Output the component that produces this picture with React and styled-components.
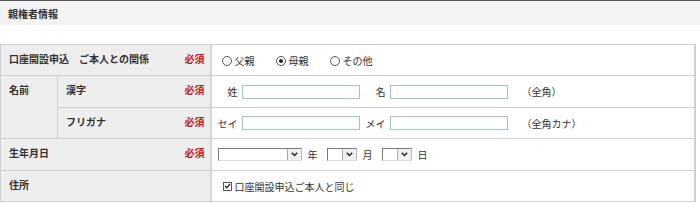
import React from 'react';
import styled, { createGlobalStyle } from 'styled-components';

const GlobalStyle = createGlobalStyle`
  body {
    margin: 0;
    background: #fff;
    font-family: "Noto Sans CJK JP", "Noto Sans", sans-serif;
    font-size: 10px;
    color: #333;
  }
`;

const Page = styled.div`
  width: 700px;
  height: 204px;
  overflow: hidden;
`;

const Heading = styled.h3`
  margin: 0;
  height: 24px;
  padding-left: 8px;
  display: flex;
  align-items: center;
  background: #f3f3f3;
  border-top: 1px solid #555;
  font-size: 10px;
  font-weight: bold;
  color: #333;
`;

const Table = styled.table`
  margin-top: 19px;
  width: 696px;
  border-collapse: collapse;
  table-layout: fixed;
  border: 1px solid #cfcfcf;
  border-right-width: 2px;

  td {
    border: 1px solid #cfcfcf;
  }
`;

const LabelCell = styled.td`
  background: #eeeeee;
  font-weight: bold;
  vertical-align: top;
  padding: 6px 5px 0 8px;
  height: ${({ $h }) => $h || 31}px;
  box-sizing: border-box;
  ${({ $divider }) => $divider && 'border-right: 2px solid #d6d6d6 !important;'}
`;

const LabelInner = styled.div`
  display: flex;
  justify-content: space-between;
`;

const Required = styled.span`
  color: #c8161d;
  font-weight: bold;
`;

const ValueCell = styled.td`
  padding: 0 6px;
  vertical-align: middle;
  white-space: nowrap;
`;

const Row = styled.div`
  display: flex;
  align-items: center;
  padding-top: ${({ $top }) => $top || 0}px;
`;

const RadioLabel = styled.label`
  display: inline-flex;
  align-items: center;
  margin-right: 21px;
  margin-left: ${({ $first }) => ($first ? 4 : 0)}px;
`;

const Radio = styled.span`
  width: 10px;
  height: 10px;
  border: 1px solid #555;
  border-radius: 50%;
  margin-right: 3px;
  box-sizing: border-box;
  display: inline-flex;
  align-items: center;
  justify-content: center;
  &::after {
    content: '';
    width: 4px;
    height: 4px;
    border-radius: 50%;
    background: ${({ $on }) => ($on ? '#222' : 'transparent')};
  }
`;

const FieldLabel = styled.span`
  width: ${({ $w }) => $w}px;
  text-align: right;
  padding-right: 4px;
  box-sizing: border-box;
  white-space: nowrap;
`;

const TextInput = styled.span`
  display: inline-block;
  width: 118px;
  height: 14px;
  border: 1px solid #a7bdd0;
  box-sizing: border-box;
  background: #fff;
`;

const Note = styled.span`
  margin-left: 14px;
`;

const Select = styled.span`
  display: inline-flex;
  justify-content: flex-end;
  width: ${({ $w }) => $w}px;
  height: 13px;
  border: 1px solid #7a7a7a;
  border-right-color: #bbb;
  border-bottom-color: #ddd;
  box-sizing: border-box;
  background: #fff;
`;

const Arrow = styled.span`
  width: 13px;
  height: 11px;
  border-left: 1px solid #aaa;
  background: #f0f0f0;
  display: flex;
  align-items: center;
  justify-content: center;
`;

const DateUnit = styled.span`
  margin: 0 ${({ $r }) => $r}px 0 6px;
`;

const Check = styled.span`
  width: 9px;
  height: 9px;
  border: 1px solid #555;
  box-sizing: border-box;
  display: inline-flex;
  align-items: center;
  justify-content: center;
  margin: 0 3px 0 5px;
`;

const ArrowIcon = () => (
  <svg width="7" height="5" viewBox="0 0 7 5">
    <path d="M0.8 0.8 L3.5 3.6 L6.2 0.8" fill="none" stroke="#222" strokeWidth="1.4" />
  </svg>
);

const DateSelect = ({ w }) => (
  <Select $w={w}>
    <Arrow>
      <ArrowIcon />
    </Arrow>
  </Select>
);

const App = () => (
  <Page>
    <GlobalStyle />
    <Heading>親権者情報</Heading>
    <Table>
      <colgroup>
        <col style={{ width: 57 }} />
        <col style={{ width: 153 }} />
        <col />
      </colgroup>
      <tbody>
        <tr>
          <LabelCell colSpan={2} $divider>
            <LabelInner>
              <span>口座開設申込　ご本人との関係</span>
              <Required>必須</Required>
            </LabelInner>
          </LabelCell>
          <ValueCell>
            <Row $top={1}>
              <RadioLabel $first>
                <Radio />父親
              </RadioLabel>
              <RadioLabel>
                <Radio $on />母親
              </RadioLabel>
              <RadioLabel>
                <Radio />その他
              </RadioLabel>
            </Row>
          </ValueCell>
        </tr>
        <tr>
          <LabelCell rowSpan={2}>名前</LabelCell>
          <LabelCell $divider $h={32}>
            <LabelInner>
              <span>漢字</span>
              <Required>必須</Required>
            </LabelInner>
          </LabelCell>
          <ValueCell>
            <Row>
              <FieldLabel $w={24}>姓</FieldLabel>
              <TextInput />
              <FieldLabel $w={30}>名</FieldLabel>
              <TextInput />
              <Note>（全角）</Note>
            </Row>
          </ValueCell>
        </tr>
        <tr>
          <LabelCell $divider>
            <LabelInner>
              <span>フリガナ</span>
              <Required>必須</Required>
            </LabelInner>
          </LabelCell>
          <ValueCell>
            <Row>
              <FieldLabel $w={24}>セイ</FieldLabel>
              <TextInput />
              <FieldLabel $w={30}>メイ</FieldLabel>
              <TextInput />
              <Note>（全角カナ）</Note>
            </Row>
          </ValueCell>
        </tr>
        <tr>
          <LabelCell colSpan={2} $divider $h={32}>
            <LabelInner>
              <span>生年月日</span>
              <Required>必須</Required>
            </LabelInner>
          </LabelCell>
          <ValueCell>
            <Row>
              <DateSelect w={84} />
              <DateUnit $r={9}>年</DateUnit>
              <DateSelect w={30} />
              <DateUnit $r={9}>月</DateUnit>
              <DateSelect w={30} />
              <DateUnit $r={0}>日</DateUnit>
            </Row>
          </ValueCell>
        </tr>
        <tr>
          <LabelCell colSpan={2} $divider>
            住所
          </LabelCell>
          <ValueCell>
            <Row>
              <Check>
                <svg width="7" height="6" viewBox="0 0 7 6">
                  <path d="M1 3 L2.8 4.8 L6 1" fill="none" stroke="#222" strokeWidth="1.3" />
                </svg>
              </Check>
              口座開設申込ご本人と同じ
            </Row>
          </ValueCell>
        </tr>
      </tbody>
    </Table>
  </Page>
);

export default App;
